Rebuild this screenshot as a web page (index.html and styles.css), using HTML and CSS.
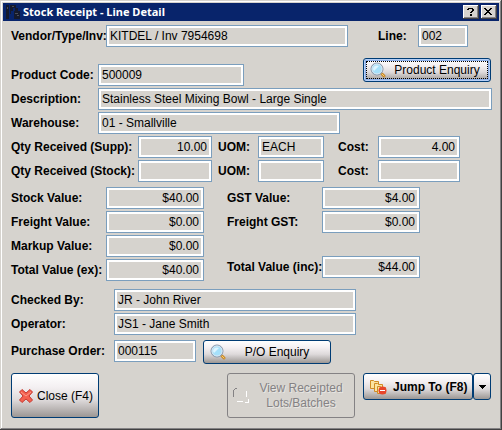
FILE: index.html
```html
<!doctype html>
<html lang="en">
  <head>
    <meta charset="UTF-8" />
    <meta name="viewport" content="width=device-width, initial-scale=1.0" />
    <title>Stock Receipt - Line Detail</title>
    <link rel="stylesheet" href="styles.css">
  </head>
  <body>
    <div class="window">
      <header class="titlebar">
        <svg class="title-icon" width="16" height="16" viewBox="0 0 16 16">
          <path fill="#151a2c" d="M1 1h3v14H1zM5 1h6v3H8v3H6v3H5z" />
          <path fill="#151a2c" d="M9 7h1V4h3v3h2v8H9z" />
          <path fill="#4a4d58" d="M10 9h3v1h-3zM12 11h2v1h-2zM2 3h1v2H2zM7 2h2v1H7z" />
        </svg>
        <h1 class="title">Stock Receipt - Line Detail</h1>
        <button class="title-btn" type="button" aria-label="Help">
          <svg width="13" height="12" viewBox="0 0 13 12" shape-rendering="crispEdges">
            <path fill="#000" d="M4 2h5v1H4zM3 3h2v1H3zM8 3h2v2H8zM7 5h2v1H7zM6 6h2v1H6zM6 8h2v2H6z" />
          </svg>
        </button>
        <button class="title-btn" type="button" aria-label="Close window">
          <svg width="13" height="12" viewBox="0 0 13 12" shape-rendering="crispEdges">
            <path fill="#000" d="M2 2h2v1H2zM8 2h2v1H8zM3 3h2v1H3zM7 3h2v1H7zM4 4h4v1H4zM5 5h2v1H5zM4 6h4v1H4zM3 7h2v1H3zM7 7h2v1H7zM2 8h2v1H2zM8 8h2v1H8z" />
          </svg>
        </button>
      </header>

      <form class="content">
        <div class="row">
          <label class="label label-md" for="vendor">Vendor/Type/Inv:</label>
          <input class="field field-xl" id="vendor" value="KITDEL / Inv 7954698" readonly>
          <label class="label label-xs line-label" for="line">Line:</label>
          <input class="field field-xs" id="line" value="002" readonly>
        </div>

        <div class="row product-row">
          <label class="label label-sm" for="code">Product Code:</label>
          <input class="field field-lg" id="code" value="500009" readonly>
          <button class="btn btn-enquiry btn-focus" type="button">
            <svg width="16" height="16" viewBox="0 0 16 16">
              <path stroke="#c98a2c" stroke-width="3" stroke-linecap="round" d="M12 12l2 2" />
              <path stroke="#f8d070" stroke-width="1" stroke-linecap="round" d="M12 12l2 2" />
              <circle cx="7" cy="7" r="6" fill="#a5e0fa" stroke="#8793a5" stroke-width="1" />
              <circle cx="7" cy="7" r="5" fill="none" stroke="#dce6f0" stroke-width="1" />
              <path fill="#dff5ff" d="M3 7a4 4 0 0 1 6-3L4 9z" />
            </svg>
            <span class="btn-text">Product Enquiry</span>
          </button>
        </div>

        <div class="row">
          <label class="label label-sm" for="description">Description:</label>
          <input class="field field-fill" id="description" value="Stainless Steel Mixing Bowl - Large Single" readonly>
        </div>

        <div class="row">
          <label class="label label-sm" for="warehouse">Warehouse:</label>
          <input class="field field-xl" id="warehouse" value="01 - Smallville" readonly>
        </div>

        <div class="row">
          <label class="label label-xl" for="qty-supp">Qty Received (Supp):</label>
          <input class="field field-qty num" id="qty-supp" value="10.00" readonly>
          <label class="label label-xs uom-label" for="uom-supp">UOM:</label>
          <input class="field field-uom" id="uom-supp" value="EACH" readonly>
          <label class="label label-xs cost-label" for="cost-supp">Cost:</label>
          <input class="field field-sm num" id="cost-supp" value="4.00" readonly>
        </div>

        <div class="row">
          <label class="label label-xl" for="qty-stock">Qty Received (Stock):</label>
          <input class="field field-qty num" id="qty-stock" readonly>
          <label class="label label-xs uom-label" for="uom-stock">UOM:</label>
          <input class="field field-uom" id="uom-stock" readonly>
          <label class="label label-xs cost-label" for="cost-stock">Cost:</label>
          <input class="field field-sm num" id="cost-stock" readonly>
        </div>

        <div class="values">
          <div class="column">
            <div class="row">
              <label class="label label-md" for="stock-value">Stock Value:</label>
              <input class="field field-md num" id="stock-value" value="$40.00" readonly>
            </div>
            <div class="row">
              <label class="label label-md" for="freight-value">Freight Value:</label>
              <input class="field field-md num" id="freight-value" value="$0.00" readonly>
            </div>
            <div class="row">
              <label class="label label-md" for="markup-value">Markup Value:</label>
              <input class="field field-md num" id="markup-value" value="$0.00" readonly>
            </div>
            <div class="row">
              <label class="label label-md" for="total-ex">Total Value (ex):</label>
              <input class="field field-md num" id="total-ex" value="$40.00" readonly>
            </div>
          </div>
          <div class="column">
            <div class="row">
              <label class="label label-md" for="gst-value">GST Value:</label>
              <input class="field field-md num" id="gst-value" value="$4.00" readonly>
            </div>
            <div class="row">
              <label class="label label-md" for="freight-gst">Freight GST:</label>
              <input class="field field-md num" id="freight-gst" value="$0.00" readonly>
            </div>
            <div class="row total-inc">
              <label class="label label-md" for="total-inc">Total Value (inc):</label>
              <input class="field field-md num" id="total-inc" value="$44.00" readonly>
            </div>
          </div>
        </div>

        <div class="column people">
          <div class="row">
            <label class="label label-lg" for="checked-by">Checked By:</label>
            <input class="field field-xl" id="checked-by" value="JR - John River" readonly>
          </div>
          <div class="row">
            <label class="label label-lg" for="operator">Operator:</label>
            <input class="field field-xl" id="operator" value="JS1 - Jane Smith" readonly>
          </div>
        </div>

        <div class="row order-row">
          <label class="label label-lg" for="order">Purchase Order:</label>
          <input class="field field-sm" id="order" value="000115" readonly>
          <button class="btn btn-enquiry" type="button">
            <svg width="16" height="16" viewBox="0 0 16 16">
              <path stroke="#c98a2c" stroke-width="3" stroke-linecap="round" d="M12 12l2 2" />
              <path stroke="#f8d070" stroke-width="1" stroke-linecap="round" d="M12 12l2 2" />
              <circle cx="7" cy="7" r="6" fill="#a5e0fa" stroke="#8793a5" stroke-width="1" />
              <circle cx="7" cy="7" r="5" fill="none" stroke="#dce6f0" stroke-width="1" />
              <path fill="#dff5ff" d="M3 7a4 4 0 0 1 6-3L4 9z" />
            </svg>
            <span class="btn-text">P/O Enquiry</span>
          </button>
        </div>

        <div class="actions">
          <button class="btn btn-close" type="button">
            <svg width="16" height="16" viewBox="0 0 16 16">
              <path fill="#f4604f" stroke="#c43a31" stroke-linejoin="round" d="M4 1.500L8 5l4-3.500 2.500 2.500L11 8l3.500 4-2.500 2.500L8 11l-4 3.500L1.500 12 5 8 1.500 4z" />
              <path fill="none" stroke="#fb9a88" d="M3 4l5 4 5-4" />
            </svg>
            <span>Close (F4)</span>
          </button>
          <button class="btn btn-lots" type="button" disabled>
            <svg width="16" height="16" viewBox="0 0 16 16" shape-rendering="crispEdges">
              <path fill="#848284" d="M2 0h2v1H2zM1 1h1v1H1zM0 2h1v7H0z" />
              <path fill="#fff" d="M13 3h1v6h-1zM4 13h6v1H4zM15 11h1v4h-1zM12 14h3v1h-3z" />
            </svg>
            <span class="btn-text">View Receipted<br>Lots/Batches</span>
          </button>
          <div class="split">
            <button class="btn btn-jump" type="button">
              <svg width="17" height="16" viewBox="0 0 17 16">
                <g fill="#fbe3a0" stroke="#d08b24">
                  <path d="M.5 1.500h3l1 1h4v7h-8z" />
                  <path d="M4.500 4.500h3l1 1h4v7h-8z" />
                  <path d="M7.500 7.500h3l1 1h4v6h-8z" />
                </g>
                <circle cx="12.500" cy="11.500" r="4" fill="#e8452c" />
                <path fill="#fff" d="M10 11h5v1h-5z" />
              </svg>
              <span>Jump To (F8)</span>
            </button>
            <button class="btn btn-drop" type="button" aria-label="More destinations">
              <svg width="7" height="4" viewBox="0 0 7 4" shape-rendering="crispEdges">
                <path fill="#000" d="M0 0h7v1H6v1H5v1H4v1H3V3H2V2H1V1H0z" />
              </svg>
            </button>
          </div>
        </div>
      </form>
    </div>
  </body>
</html>
```
FILE: styles.css
```css
:root {
  --face: #d6d3ce;
  --shadow: #848284;
  --dark: #424142;
  --field-border: #7b9ebd;
  --btn-border: #003c74;
}

* {
  box-sizing: border-box;
}

body {
  margin: 0;
  background: var(--face);
  color: #000;
  font: 12px/14px "Liberation Sans", Arial, sans-serif;
}

.window {
  min-height: 100vh;
  padding: 3px;
  background: var(--face);
  box-shadow:
    inset -1px -1px var(--dark),
    inset 1px 1px var(--face),
    inset -2px -2px var(--shadow),
    inset 2px 2px #fff;
}

.titlebar {
  display: flex;
  align-items: center;
  gap: 2px;
  height: 18px;
  padding: 0 2px;
  background: #08246b;
}

.title {
  flex: 1;
  margin: 0;
  color: #fff;
  font: bold 11px/18px "Noto Sans", Tahoma, sans-serif;
}

.title-btn {
  width: 16px;
  height: 14px;
  padding: 1px;
  border: 0;
  background: var(--face);
  box-shadow:
    inset -1px -1px var(--dark),
    inset 1px 1px #fff,
    inset -2px -2px var(--shadow);
}

.title-btn svg,
.btn svg {
  display: block;
  flex: none;
}

.content {
  display: flex;
  flex-direction: column;
  gap: 2px;
  padding: 4px 7px 8px 8px;
}

.row {
  display: flex;
  align-items: flex-end;
}

.column {
  display: flex;
  flex-direction: column;
  gap: 2px;
}

.label {
  flex: none;
  font-weight: bold;
  line-height: 22px;
  white-space: nowrap;
}

.label-xs { width: 40px; }
.label-sm { width: 87px; }
.label-md { width: 95px; }
.label-lg { width: 103px; }
.label-xl { width: 127px; }

.line-label { margin-left: 30px; }
.uom-label { margin-left: 6px; }
.cost-label { margin-left: 14px; }

.field {
  height: 22px;
  min-width: 0;
  padding: 0 4px 0 3px;
  border: 1px solid var(--field-border);
  border-radius: 0;
  outline: 0;
  background: var(--face);
  box-shadow: inset 0 0 0 2px #fff;
  color: #000;
  font: inherit;
}

.field-xs { width: 50px; }
.field-uom { width: 66px; }
.field-qty { width: 74px; }
.field-sm { width: 82px; }
.field-md { width: 98px; }
.field-lg { width: 146px; }
.field-xl { width: 242px; }
.field-fill { flex: 1; }

.num {
  text-align: right;
}

.product-row {
  margin-top: 9px;
}

.product-row .btn {
  align-self: flex-start;
  margin: 0 1px 4px auto;
}

.values {
  display: flex;
  gap: 23px;
  margin-top: 3px;
}

.total-inc {
  margin-top: 21px;
}

.people {
  margin-top: 6px;
}

.order-row {
  align-items: flex-start;
  margin-top: 3px;
}

.order-row .btn {
  margin-left: 7px;
}

.btn {
  display: flex;
  align-items: center;
  padding: 0 6px;
  border: 1px solid var(--btn-border);
  border-radius: 3px;
  background: linear-gradient(#fff, #f4f0f2 30%, #dedadb 60%, #9c9794);
  color: #000;
  font: inherit;
}

.btn-text {
  flex: 1;
  text-align: center;
}

.btn-enquiry {
  position: relative;
  gap: 4px;
  width: 128px;
  height: 24px;
}

.btn-focus {
  box-shadow: inset 0 0 0 1px #b5cff7, inset 0 0 0 2px #8caee7;
}

/* dotted keyboard focus rectangle */
.btn-focus::after {
  content: "";
  position: absolute;
  inset: 2px;
  border: 1px dotted #000;
}

.actions {
  display: flex;
  align-items: flex-start;
  margin: 7px 1px 0 0;
}

.btn-close {
  gap: 3px;
  width: 88px;
  height: 45px;
  white-space: nowrap;
}

.btn-lots {
  gap: 4px;
  width: 128px;
  height: 45px;
  margin-left: auto;
  padding: 0 5px;
  border-color: var(--shadow);
  background: var(--face);
  color: var(--shadow);
  line-height: 15px;
  text-shadow: 1px 1px #e8e6e2;
}

.split {
  display: flex;
  margin-left: 8px;
}

.btn-jump {
  gap: 6px;
  width: 110px;
  height: 27px;
  font-weight: bold;
  white-space: nowrap;
}

.btn-drop {
  justify-content: center;
  width: 18px;
  height: 27px;
  padding: 0;
}
```
